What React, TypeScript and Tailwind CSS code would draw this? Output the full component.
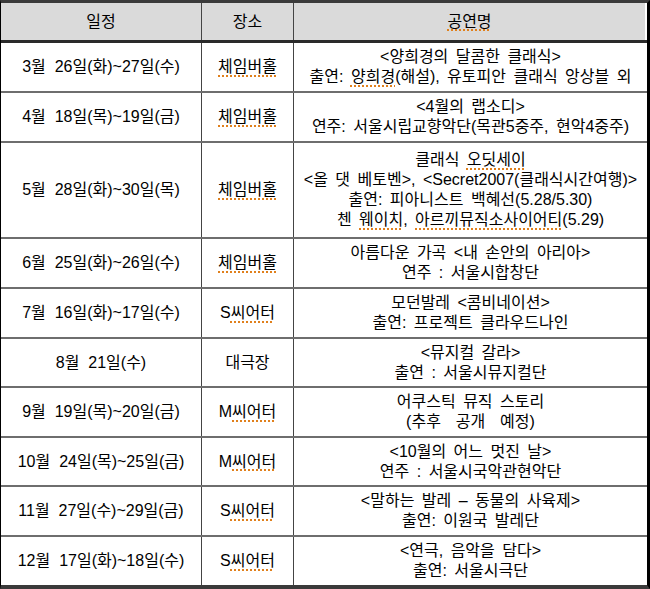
type Row = {
  date: string;
  place: string;
  lines: string[];
  h: string;
};

// words wrapped in _..._ get the spell-check squiggle
const rows: Row[] = [
  {
    date: "3월  26일(화)~27일(수)",
    place: "_체임버홀_",
    lines: ["<양희경의 달콤한 클래식>", "출연: _양희경_(해설), 유토피안 클래식 앙상블 외"],
    h: "h-[50px]",
  },
  {
    date: "4월  18일(목)~19일(금)",
    place: "_체임버홀_",
    lines: ["<4월의 랩소디>", "연주: 서울시립교향악단(목관5중주, 현악4중주)"],
    h: "h-[50px]",
  },
  {
    date: "5월  28일(화)~30일(목)",
    place: "_체임버홀_",
    lines: [
      "클래식 _오딧세이_",
      "<올 댓 베토벤>, <Secret2007(클래식시간여행)>",
      "출연: 피아니스트 백혜선(5.28/5.30)",
      "첸 _웨이치_, _아르끼뮤직소사이어티_(5.29)",
    ],
    h: "h-[96px]",
  },
  {
    date: "6월  25일(화)~26일(수)",
    place: "_체임버홀_",
    lines: ["아름다운 가곡 <내 손안의 아리아>", "연주 : 서울시합창단"],
    h: "h-[50px]",
  },
  {
    date: "7월  16일(화)~17일(수)",
    place: "S_씨어터_",
    lines: ["모던발레 <콤비네이션>", "출연: 프로젝트 클라우드나인"],
    h: "h-[50px]",
  },
  {
    date: "8월  21일(수)",
    place: "대극장",
    lines: ["<뮤지컬 갈라>", "출연 : 서울시뮤지컬단"],
    h: "h-[49px]",
  },
  {
    date: "9월  19일(목)~20일(금)",
    place: "M_씨어터_",
    lines: ["어쿠스틱 뮤직 스토리", "(추후  공개  예정)"],
    h: "h-[50px]",
  },
  {
    date: "10월  24일(목)~25일(금)",
    place: "M_씨어터_",
    lines: ["<10월의 어느 멋진 날>", "연주 : 서울시국악관현악단"],
    h: "h-[49px]",
  },
  {
    date: "11월  27일(수)~29일(금)",
    place: "S_씨어터_",
    lines: ["<말하는 발레 – 동물의 사육제>", "출연: 이원국 발레단"],
    h: "h-[50px]",
  },
  {
    date: "12월  17일(화)~18일(수)",
    place: "S_씨어터_",
    lines: ["<연극, 음악을 담다>", "출연: 서울시극단"],
    h: "h-[48px]",
  },
];

const Txt = ({ s }: { s: string }) => (
  <>
    {s.split("_").map((part, i) =>
      i % 2 === 1 ? (
        <span
          key={i}
          className="underline decoration-dotted decoration-[#e0801c] decoration-2 underline-offset-[3px]"
        >
          {part}
        </span>
      ) : (
        <span key={i}>{part}</span>
      )
    )}
  </>
);

export default function App() {
  return (
    <div className="w-[650px] h-[589px] bg-white font-['Liberation_Sans','Noto_Sans_CJK_KR',sans-serif] text-[16px] leading-[20px] text-black border-l border-l-black border-r-[3px] border-r-black border-t-[3px] border-t-[#3a3a3a] border-b-4 border-b-[#3a3a3a]">
      <div className="grid grid-cols-[201px_92px_1fr] h-10 border-b-[3px] border-b-[#2a2a2a]">
        <div className="bg-[#dadada] border-r border-r-[#444] flex items-center justify-center">
          일정
        </div>
        <div className="bg-[#dadada] border-r border-r-[#444] flex items-center justify-center">
          장소
        </div>
        <div className="bg-[#dadada] border-r-2 border-r-white flex items-center justify-center">
          <Txt s="_공연명_" />
        </div>
      </div>
      {rows.map((r, i) => (
        <div
          key={i}
          className={`grid grid-cols-[201px_92px_1fr] ${r.h} ${
            i < rows.length - 1 ? "border-b-2 border-b-[#6e6e6e]" : ""
          }`}
        >
          <div className="border-r border-r-[#444] flex items-center justify-center whitespace-pre">
            {r.date}
          </div>
          <div className="border-r border-r-[#444] flex items-center justify-center">
            <Txt s={r.place} />
          </div>
          <div className="flex flex-col items-center justify-center whitespace-pre [word-spacing:3px]">
            {r.lines.map((l, j) => (
              <div key={j}>
                <Txt s={l} />
              </div>
            ))}
          </div>
        </div>
      ))}
    </div>
  );
}
